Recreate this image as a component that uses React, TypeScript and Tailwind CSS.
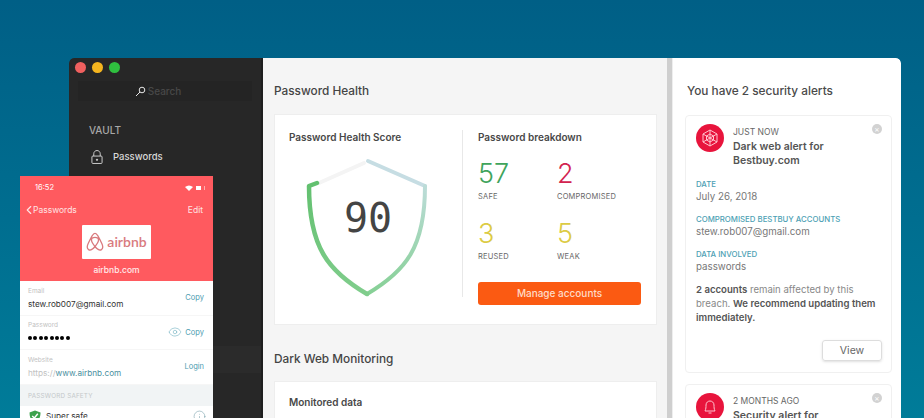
import React from 'react';
import { ChevronLeft, Eye, Info } from 'lucide-react';

const sans = { fontFamily: 'Inter, "Noto Sans", sans-serif' };

const Stat: React.FC<{ value: string; label: string; color: string }> = ({ value, label, color }) => (
  <div className="h-[60px]">
    <div className={`text-[27px] leading-[32px] font-light ${color}`}>{value}</div>
    <div className="mt-[2px] text-[7.5px] leading-[10px] tracking-[0.2px] text-[#666]">{label}</div>
  </div>
);

const Shield: React.FC = () => (
  <div className="relative mt-[11px] ml-[11px] h-[146px] w-[136px]">
    <svg width="136" height="146" viewBox="0 0 136 146" fill="none" strokeWidth="4" strokeLinecap="round" strokeLinejoin="round">
      <defs>
        <linearGradient id="rightSide" x1="0" y1="0" x2="0" y2="1">
          <stop offset="0" stopColor="#bcdcd8" />
          <stop offset="1" stopColor="#86d095" />
        </linearGradient>
        <linearGradient id="leftSide" x1="0" y1="0" x2="0" y2="1">
          <stop offset="0" stopColor="#62c06f" />
          <stop offset="1" stopColor="#80cd8c" />
        </linearGradient>
      </defs>
      <path d="M19 28 L64 8" stroke="#f4f4f4" />
      <path d="M68 6 L125 31" stroke="#c6dde3" />
      <path d="M125 31 C125 92 106 116 67 139" stroke="url(#rightSide)" />
      <path d="M67 139 C28 116 9 92 9 31 L17 28" stroke="url(#leftSide)" strokeWidth="4.5" />
    </svg>
    <div className="absolute left-[9px] right-[9px] top-[39px] text-center text-[40px] leading-[48px] text-[#444]" style={{ fontFamily: '"DejaVu Sans Mono", monospace' }}>
      90
    </div>
  </div>
);

const SmallClose: React.FC = () => (
  <div className="flex h-[10px] w-[10px] items-center justify-center rounded-full bg-[#d2d2d2] text-[8px] leading-none text-white">×</div>
);

const Field: React.FC<{ label: string; value: string }> = ({ label, value }) => (
  <div className="mb-[9px]">
    <div className="text-[7.8px] leading-[12px] font-medium text-[#4d9fb4]">{label}</div>
    <div className="text-[9.75px] leading-[14px] text-[#777]">{value}</div>
  </div>
);

const PhoneRow: React.FC<{ label: string; action: string; eye?: boolean; children: React.ReactNode }> = ({ label, action, eye, children }) => (
  <div className="flex h-[34.5px] items-center border-b border-[#f6f6f6] pt-[2px] pr-[9px] pl-[8px]">
    <div className="flex-1">
      <div className="text-[6.5px] leading-[9px] text-[#c2c2c2]">{label}</div>
      <div className="mt-[1px] flex h-[14px] items-center text-[8.2px] leading-[14px] text-[#333]">{children}</div>
    </div>
    {eye && <Eye size={14} strokeWidth={1} className="mr-[3px] mb-[2px] text-[#6fb0c0]" />}
    <div className="mb-[2px] text-[7.5px] text-[#4b9cb0]">{action}</div>
  </div>
);

const PasswordDots: React.FC = () => (
  <div className="flex gap-[1.4px]">
    {[0, 1, 2, 3, 4, 5, 6, 7].map(i => (
      <div key={i} className="h-[4px] w-[4px] rounded-full bg-black" />
    ))}
  </div>
);

const Phone: React.FC = () => (
  <div className="absolute left-[20px] top-[176px] h-[242px] w-[193px] overflow-hidden bg-white">
    <div className="h-[105px] bg-[#ff5a5f] text-white">
      <div className="flex h-[24px] items-center justify-between pr-[8px] pl-[15px] text-[7.5px]">
        <span>16:52</span>
        <div className="flex items-center gap-[3px]">
          <svg width="8" height="6" viewBox="0 0 8 6"><path d="M0 2 Q4 -1 8 2 L4 6Z" fill="#fff" /></svg>
          <div className="h-[4px] w-[5px] bg-white" />
          <div className="h-[4px] w-[1px] bg-white/50" />
        </div>
      </div>
      <div className="flex h-[20px] items-center justify-between pr-[10px] pl-[2px] text-[8.5px] text-[#ffe3e3]">
        <div className="flex items-center">
          <ChevronLeft size={14} strokeWidth={2} />
          <span className="-ml-[3px]">Passwords</span>
        </div>
        <span>Edit</span>
      </div>
      <div className="mx-auto mt-[5px] flex h-[34px] w-[69px] items-center justify-center gap-[3px] rounded-[1px] bg-white">
        <svg width="18" height="20" viewBox="0 0 18 20" fill="none" stroke="#d97a7e" strokeWidth="1.3" strokeLinejoin="round">
          <path d="M9 14.5 C6.5 11.5 5.5 9.5 5.5 8 C5.5 6.3 7 5.4 9 5.4 C11 5.4 12.5 6.3 12.5 8 C12.5 9.5 11.5 11.5 9 14.5 C6.5 17.5 4 18.6 2.6 17.6 C0.8 16.4 1 14 2.2 11.5 C3.8 8 5.5 4.5 6.8 2.8 C7.6 1.7 8.2 1.3 9 1.3 C9.8 1.3 10.4 1.7 11.2 2.8 C12.5 4.5 14.2 8 15.8 11.5 C17 14 17.2 16.4 15.4 17.6 C14 18.6 11.5 17.5 9 14.5Z" />
        </svg>
        <span className="text-[14px] leading-none font-semibold text-[#d97a7e]" style={{ fontFamily: 'Lato, sans-serif' }}>airbnb</span>
      </div>
      <div className="mt-[5px] text-center text-[8.5px] leading-[12px] font-medium text-[#ffecec]">airbnb.com</div>
    </div>
    <PhoneRow label="Email" action="Copy">stew.rob007@gmail.com</PhoneRow>
    <PhoneRow label="Password" action="Copy" eye>
      <PasswordDots />
    </PhoneRow>
    <PhoneRow label="Website" action="Login">
      <span className="text-[#c2c2c2]">https://</span>
      <span className="text-[#4b8fa0]">www.airbnb.com</span>
    </PhoneRow>
    <div className="flex h-[21px] items-center bg-[#f1f4f5] pt-[3px] pl-[8px] text-[6.3px] tracking-[0.2px] text-[#c4c8ca]">PASSWORD SAFETY</div>
    <div className="flex items-center pt-[4px] pr-[7px] pl-[9px]">
      <svg width="12" height="13" viewBox="0 0 12 13">
        <path d="M6 0.5 L11.5 2.5 C11.5 8 9.5 11 6 12.5 C2.5 11 0.5 8 0.5 2.5Z" fill="#3da24d" />
        <path d="M3.2 6 L5.4 8 L8.8 3.8" stroke="#fff" strokeWidth="1.4" fill="none" />
      </svg>
      <span className="ml-[5px] flex-1 text-[8.2px] leading-[13px] text-[#333]">Super safe</span>
      <Info size={13} strokeWidth={1} className="text-[#6f9aa6]" />
    </div>
  </div>
);

const Sidebar: React.FC = () => (
  <aside className="h-full w-[194px] shrink-0 rounded-tl-[5px] border-r-2 border-[#1e1e1e] bg-[#272727] pt-[4px]">
    <div className="flex h-[10px] gap-[6px] pl-[6px]">
      <div className="h-[11px] w-[11px] rounded-full bg-[#f0605f]" />
      <div className="h-[11px] w-[11px] rounded-full bg-[#f5b51f]" />
      <div className="h-[11px] w-[11px] rounded-full bg-[#2fbf3f]" />
    </div>
    <div className="mx-[9px] mt-[9px] flex h-[20px] items-center justify-center gap-[2px] bg-[#242424] pr-[14px] text-[10px] text-[#484848]">
      <svg width="11" height="11" viewBox="0 0 11 11" fill="none" stroke="#e6e6e6">
        <circle cx="7" cy="4" r="2.8" />
        <path d="M5 6 L1 10" />
      </svg>
      <span className="font-medium">Search</span>
    </div>
    <div className="mt-[22px] pl-[20px] text-[10px] leading-[14px] font-medium text-[#a8a8a8]">VAULT</div>
    <div className="mt-[12px] flex items-center pl-[22px] text-[9.5px] font-medium text-[#d8d8d8]">
      <svg width="12" height="16" viewBox="0 0 13 16" fill="none" stroke="#d8d8d8" strokeWidth="1">
        <rect x="1" y="7" width="11" height="8" rx="1" />
        <path d="M3 7 V4.5 C3 2.5 4.5 1 6.5 1 C8.5 1 10 2.5 10 4.5 V7" />
        <circle cx="6.5" cy="11" r="0.7" fill="#d8d8d8" />
      </svg>
      <span className="ml-[10px]">Passwords</span>
    </div>
    <div className="mt-[181px] h-[27px] bg-[#2b2b2b]" />
  </aside>
);

const HealthMain: React.FC = () => (
  <main className="h-full w-[404px] shrink-0 overflow-hidden bg-[#f5f5f5] pl-[11px] text-[#444]">
    <h2 className="pt-[25px] text-[11.8px] leading-[16px] font-medium">Password Health</h2>
    <section className="mt-[15px] flex h-[211px] w-[383px] border border-[#eeeeee] bg-white pt-[15px]">
      <div className="w-[187px] pl-[14px]">
        <h3 className="text-[10px] leading-[14px] font-semibold text-[#484848]">Password Health Score</h3>
        <Shield />
      </div>
      <div className="h-[167px] w-px shrink-0 bg-[#e8e8e8]" />
      <div className="pl-[15px]">
        <h3 className="text-[10px] leading-[14px] font-semibold text-[#484848]">Password breakdown</h3>
        <div className="mt-[14px] grid w-[163px] grid-cols-[79px_1fr]">
          <Stat value="57" label="SAFE" color="text-[#3fa45c]" />
          <Stat value="2" label="COMPROMISED" color="text-[#d2234f]" />
          <Stat value="3" label="REUSED" color="text-[#dccb45]" />
          <Stat value="5" label="WEAK" color="text-[#dccb45]" />
        </div>
        <div className="mt-[4px] flex h-[23px] w-[163px] items-center justify-center rounded-[3px] bg-[#fb5a12] text-[10px] font-medium text-[#ffdcc8]">
          Manage accounts
        </div>
      </div>
    </section>
    <h2 className="pt-[26px] text-[11.8px] leading-[16px] font-medium">Dark Web Monitoring</h2>
    <section className="mt-[14px] h-[60px] w-[383px] border border-[#eeeeee] bg-white pt-[13px] pl-[14px]">
      <h3 className="text-[10px] leading-[14px] font-semibold text-[#484848]">Monitored data</h3>
    </section>
  </main>
);

const AlertsPanel: React.FC = () => (
  <aside className="h-full w-[228px] shrink-0 rounded-tr-[5px] bg-white pl-[12px] text-[#555]">
    <h2 className="pt-[25px] pl-[2px] text-[11.8px] leading-[16px] font-medium text-[#4a4a4a]">You have 2 security alerts</h2>
    <section className="mt-[16px] h-[258px] w-[207px] rounded-[4px] border border-[#f0f0f0] pr-[9px] pl-[10px]">
      <div className="flex pt-[8px]">
        <div className="flex h-[28px] w-[28px] shrink-0 items-center justify-center rounded-full bg-[#e8143c]">
          <svg width="18" height="18" viewBox="0 0 18 18" fill="none" stroke="#ffc4cf" strokeWidth="1">
            <path d="M9 1 L16 5 V13 L9 17 L2 13 V5Z" />
            <path d="M9 5 L12.5 7 V11 L9 13 L5.5 11 V7Z" />
            <path d="M9 1 V17 M2 5 L16 13 M16 5 L2 13" />
          </svg>
        </div>
        <div className="ml-[9px] flex-1 pt-[2px]">
          <div className="text-[8.5px] leading-[12px] text-[#666]">JUST NOW</div>
          <div className="mt-[2px] text-[10.5px] leading-[14px] font-semibold text-[#555]">Dark web alert for<br />Bestbuy.com</div>
        </div>
        <SmallClose />
      </div>
      <div className="mt-[10px]">
        <Field label="DATE" value="July 26, 2018" />
        <Field label="COMPROMISED BESTBUY ACCOUNTS" value="stew.rob007@gmail.com" />
        <Field label="DATA INVOLVED" value="passwords" />
      </div>
      <p className="mt-[9px] text-[9.6px] leading-[14px] whitespace-nowrap text-[#888]">
        <b className="font-semibold text-[#555]">2 accounts</b> remain affected by this<br />
        breach. <b className="font-semibold text-[#555]">We recommend updating them</b><br />
        <b className="font-semibold text-[#555]">immediately.</b>
      </p>
      <div className="mt-[15px] flex justify-end">
        <button className="h-[21px] w-[60px] rounded-[3px] border border-[#dddddd] text-[10.5px] text-[#666] shadow-sm">View</button>
      </div>
    </section>
    <section className="mt-[11px] h-[60px] w-[207px] rounded-[4px] border border-[#f0f0f0] pr-[9px] pl-[10px]">
      <div className="flex pt-[8px]">
        <div className="flex h-[28px] w-[28px] shrink-0 items-center justify-center rounded-full bg-[#e8143c]">
          <svg width="16" height="16" viewBox="0 0 16 16" fill="none" stroke="#ffc4cf" strokeWidth="1">
            <path d="M3 12 C4 10 4 8 4 6 C4 3.5 6 2 8 2 C10 2 12 3.5 12 6 C12 8 12 10 13 12Z" />
            <path d="M6.5 14 H9.5" />
          </svg>
        </div>
        <div className="ml-[9px] flex-1 pt-[2px]">
          <div className="text-[8.5px] leading-[12px] text-[#666]">2 MONTHS AGO</div>
          <div className="mt-[2px] text-[10.5px] leading-[14px] font-semibold text-[#555]">Security alert for</div>
        </div>
        <SmallClose />
      </div>
    </section>
  </aside>
);

export default function App() {
  return (
    <div className="relative h-[420px] w-[924px] overflow-hidden bg-white" style={sans}>
      <div className="h-[418px] overflow-hidden bg-gradient-to-b from-[#005f86] to-[#007c99] pt-[58px] pl-[69px]">
        <div className="flex h-[360px] w-[832px] overflow-hidden rounded-t-[5px]">
          <Sidebar />
          <HealthMain />
          <div className="h-full w-[6px] shrink-0 border-r border-[#eeeeee] bg-[#cfcfcf]" />
          <AlertsPanel />
        </div>
      </div>
      <Phone />
    </div>
  );
}
